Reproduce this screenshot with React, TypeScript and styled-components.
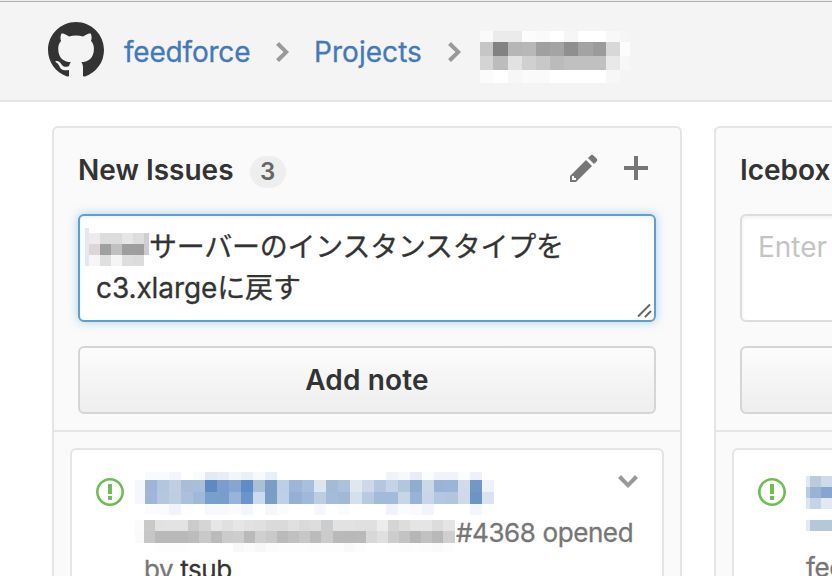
import React from "react";
import styled, { createGlobalStyle } from "styled-components";

const GlobalStyle = createGlobalStyle`
  *, *::before, *::after { box-sizing: border-box; }
  html, body { margin: 0; overflow: hidden; background: #fff; }
  body { font-family: Inter, "Noto Sans CJK JP", sans-serif; font-size: 28px; color: #333; }
  svg { display: block; flex: none; }
`;

const Page = styled.div`
  width: 832px;
  height: 576px;
  overflow: hidden;
  display: flex;
  flex-direction: column;
  border-top: 1px solid #ededed;
`;

const Header = styled.header`
  flex: none;
  height: 101px;
  display: flex;
  align-items: flex-start;
  padding-left: 48px;
  background: #f4f4f4;
  border-top: 1px solid #b0b0b0;
  border-bottom: 2px solid #e5e5e5;
`;

const Mark = styled.a`
  margin: 20px 20px 0 0;
  color: #333;
`;

const Crumb = styled.a<{ $width: number; $spacing: number }>`
  width: ${(p) => p.$width}px;
  letter-spacing: ${(p) => p.$spacing}px;
  margin-top: 30px;
  line-height: 40px;
  color: #4479b8;
  -webkit-text-stroke: 0.3px currentColor;
  white-space: nowrap;
`;

const Separator = styled.span<{ $gap: number }>`
  margin: 34px ${(p) => p.$gap}px 0 0;
  color: #999;
`;

const RedactedCrumb = styled.span`
  margin-top: 29px;
`;

const Board = styled.main`
  flex: none;
  display: flex;
  gap: 32px;
  padding: 24px 0 0 52px;
`;

const Column = styled.section`
  flex: none;
  width: 630px;
  height: 480px;
  background: #fafafa;
  border: 2px solid #e5e5e5;
  border-radius: 6px;
`;

const ColumnTop = styled.div`
  height: 304px;
  padding: 0 24px;
  border-bottom: 2px solid #e5e5e5;
`;

const ColumnHeader = styled.div`
  display: flex;
  align-items: center;
  height: 86px;
  padding-bottom: 2px;
`;

const ColumnTitle = styled.h2`
  margin: 0;
  font-size: 28px;
  font-weight: 600;
  line-height: 40px;
  white-space: nowrap;
`;

const Counter = styled.span`
  margin: 4px auto 0 16px;
  width: 36px;
  height: 32px;
  border-radius: 20px;
  background: #eee;
  color: #666;
  font-size: 24px;
  font-weight: 600;
  line-height: 32px;
  text-align: center;
`;

const HeaderAction = styled.span<{ $right: number }>`
  margin: 0 ${(p) => p.$right}px 4px 0;
  color: #767676;
`;

const NoteField = styled.div<{ $focused?: boolean }>`
  position: relative;
  height: 108px;
  padding: 10px 16px;
  line-height: 42px;
  color: ${(p) => (p.$focused ? "#333" : "#c4c4c4")};
  background: #fff;
  border: 2px solid ${(p) => (p.$focused ? "#5f9fcc" : "#ddd")};
  border-radius: 6px;
  box-shadow: inset 0 2px 4px rgba(0, 0, 0, 0.06)${(p) =>
    p.$focused ? ", 0 0 10px rgba(81, 167, 232, 0.5)" : ""};
`;

const NoteLine = styled.div<{ $spacing: number }>`
  display: flex;
  height: 41px;
  letter-spacing: ${(p) => p.$spacing}px;
  -webkit-text-stroke: 0.3px currentColor;
  white-space: nowrap;
`;

const NoteMask = styled.span`
  width: 64px;
  margin: 2px 0 0 -11px;
`;

const Grip = styled.span`
  position: absolute;
  right: 2px;
  bottom: 2px;
`;

const AddButton = styled.button`
  display: block;
  width: 100%;
  height: 68px;
  margin-top: 24px;
  padding: 0;
  font: 600 28px/40px Inter, sans-serif;
  letter-spacing: 0.15px;
  color: #333;
  border: 2px solid #d5d5d5;
  border-radius: 6px;
  background: linear-gradient(#fcfcfc, #eee);
`;

const Card = styled.article`
  display: flex;
  align-items: flex-start;
  margin: 16px;
  height: 300px;
  background: #fff;
  border: 2px solid #e5e5e5;
  border-radius: 6px;
`;

const IssueState = styled.span`
  margin: 26px 0 0 24px;
  color: #6dbd54;
`;

const CardBody = styled.div<{ $indent: number }>`
  flex: 1;
  margin-left: ${(p) => p.$indent}px;
`;

const CardHead = styled.div<{ $top: number }>`
  display: flex;
  justify-content: space-between;
  padding: ${(p) => p.$top}px 24px 0 0;
`;

const CardMeta = styled.div<{ $indent?: number }>`
  display: flex;
  height: 37px;
  padding-left: ${(p) => p.$indent ?? 0}px;
  font-size: 26px;
  line-height: 36px;
  letter-spacing: -0.4px;
  color: #767676;
  -webkit-text-stroke: 0.3px currentColor;
  white-space: pre;
`;

const IceboxMeta = styled(CardMeta)`
  margin-top: 19px;
`;

const RepoMask = styled.span`
  width: 321px;
  padding-top: 5px;
`;

const Author = styled.a`
  color: #333;
`;

const MenuToggle = styled.span`
  margin-top: -6px;
  color: #999;
`;

type MosaicProps = { xs: number[]; ys: number[]; rows: string[] };

/** Censored text: rows of space separated hex colours between the given edges. */
function Mosaic({ xs, ys, rows }: MosaicProps) {
  const w = xs[xs.length - 1];
  const h = ys[ys.length - 1];
  return (
    <svg width={w} height={h} viewBox={`0 0 ${w} ${h}`} shapeRendering="crispEdges" aria-hidden>
      {rows.flatMap((row, r) =>
        row.split(" ").map((c, i) =>
          c === "-" ? null : (
            <rect
              key={`${r}-${i}`}
              x={xs[i]}
              y={ys[r]}
              width={xs[i + 1] - xs[i]}
              height={ys[r + 1] - ys[r]}
              fill={`#${c.length === 2 ? c + c + c : c}`}
            />
          )
        )
      )}
    </svg>
  );
}

const edges = (first: number, step: number, count: number) =>
  Array.from({ length: count + 1 }, (_, i) => Math.round(first + step * i));

type IconProps = { d: string; w: number };

function Octicon({ d, w }: IconProps) {
  return (
    <svg width={w * 2} height={32} viewBox={`0 0 ${w} 16`} fill="currentColor" fillRule="evenodd" aria-hidden>
      <path d={d} />
    </svg>
  );
}

const CHEVRON_RIGHT = "M7.5 8L2.5 13 1 11.5 4.75 8 1 4.5 2.5 3 7.5 8z";
const CHEVRON_DOWN = "M5 11L0 6l1.5-1.5L5 8.25 8.5 4.5 10 6l-5 5z";
const PLUS = "M12 9H7v5H5V9H0V7h5V2h2v5h5v2z";
const PENCIL =
  "M0 12v3h3l8-8-3-3L0 12z m3 2H1V12h1v1h1v1z m10.3-9.3l-1.3 1.3-3-3 1.3-1.3c0.39-0.39 1.02-0.39 1.41 0l1.59 1.59c0.39 0.39 0.39 1.02 0 1.41z";
const ISSUE_OPENED =
  "M7 2.3c3.14 0 5.7 2.56 5.7 5.7s-2.56 5.7-5.7 5.7A5.71 5.71 0 0 1 1.3 8c0-3.14 2.56-5.7 5.7-5.7zM7 1C3.14 1 0 4.14 0 8s3.14 7 7 7 7-3.14 7-7-3.14-7-7-7zm1 3H6v5h2V4zm0 6H6v2h2v-2z";
const GITHUB =
  "M8 0C3.58 0 0 3.58 0 8c0 3.54 2.29 6.53 5.47 7.59.4.07.55-.17.55-.38 0-.19-.01-.82-.01-1.49-2.01.37-2.53-.49-2.69-.94-.09-.23-.48-.94-.82-1.13-.28-.15-.68-.52-.01-.53.63-.01 1.08.58 1.23.82.72 1.21 1.87.87 2.33.66.07-.52.28-.87.51-1.07-1.78-.2-3.64-.89-3.64-3.95 0-.87.31-1.59.82-2.15-.08-.2-.36-1.02.08-2.12 0 0 .67-.21 2.2.82.64-.18 1.32-.27 2-.27.68 0 1.36.09 2 .27 1.53-1.04 2.2-.82 2.2-.82.44 1.1.16 1.92.08 2.12.51.56.82 1.27.82 2.15 0 3.07-1.87 3.75-3.65 3.95.29.25.54.73.54 1.48 0 1.07-.01 1.93-.01 2.2 0 .21.15.46.55.38A8.013 8.013 0 0016 8c0-4.42-3.58-8-8-8z";

const crumbMask: MosaicProps = {
  xs: [0, 13, 28, 42, 56, 70, 84, 98, 113, 126, 140, 150],
  ys: [0, 11, 25, 39, 52],
  rows: [
    "fa eb eb fc fa ff f6 ff ff f8 f5",
    "c6 82 b6 b8 a0 a4 8f a3 9b d8 fc",
    "d4 bc e2 d0 c8 bb c0 c0 c0 e9 f7",
    "fb ff f7 fa fa ff ff ff ff f7 f4",
  ],
};

const noteMask: MosaicProps = {
  xs: [0, 4, 15, 26, 37, 48, 59, 64],
  ys: [0, 5, 16, 27, 38],
  rows: [
    "e1eaf4 - - - - - -",
    "e1eaf4 eeebed dc dc e6 dd cf",
    "e1eaf4 ddd5d9 a0 c0 9e 9e cc",
    "e1eaf4 f7f5f6 df f5 de dc -",
  ],
};

const titleMask: MosaicProps = {
  xs: [0, ...edges(10, 12.04, 29)],
  ys: [0, 8, 20, 32, 43],
  rows: [
    "- f8fafd f8fafd f2f5fb - f9fbfd e3eaf5 e6edf6 f2f6fb eaf0f8 f7fafd e9eff7 - - - - - - - - - eff3fa f6f8fc e9eef6 fbfcfe f0f4fa eff3fa fbfcfe edf2fa -",
    "f5f7fd a0b3da b3c6df bfcfe1 a9bdd7 a9bfd9 5d89c5 7a9dcd 86a6d1 5f8cc9 a9c0d9 799dc6 becee6 9db6d8 a8bfdf dce5f0 a4bbd8 abc2db dfe8f1 cdd9e8 b2c8e2 c3d4e8 b1c7df 8eadcf cbd8e9 99b4d9 9ab5d9 cfdaea 7398c4 eef2f9",
    "f5f7fd a0b6d9 b5c6df bdcee0 aac0db a0b8d9 799fcf 7a9ecb 9ab4d9 6b94cb cbdaec 799ec5 bed0e8 95afd5 a0b8da bdcde0 a5bcd8 a1b9d7 d4e0ec b7cae0 a2bbdb a2bbdb c7d5e8 99b3d7 c9d6e9 b4c7e2 b2c5df cfd9ea 6c95c3 dae4f0",
    "- fafcff fafbfe f3f4fb fdfdfe - f7f9fe f7f9fd fbfcfe f2f6fd - f4f7fc fbfcfe - - f6f8fd - fbfcff - - - f0f3fb fbfcff fafafe f2f4fa - - - f3f6fd -",
  ],
};

const repoMask: MosaicProps = {
  xs: [0, ...edges(9, 11.09, 28)],
  ys: [0, 11, 23, 32],
  rows: [
    "fb c9 e2 e3 e3 cb d5 e6 e0 e6 e2 e0 da da e0 da dd cccdcf e2 e2 e0 e0 ec d5 dd e5 e5 dc e4",
    "fa c6 b9 b9 b9 bc c9 bb cb cd ba cf c9 ba c0 c7 bb cb b9 b8 b9 d8 e0 cd c2 b6 c1 b8 cf",
    "- - fd fd fd - - - - f8 fb f7 fb fd fd fd fc fd fd f9 fd - - fd fc fd fc fa fd",
  ],
};

const iceboxMask: MosaicProps = {
  xs: [0, 4, 15, 26, 37],
  ys: [0, 11, 22, 33, 44, 55],
  rows: [
    "dfe9f2 bacbdd d0dbe9 c0d0e4",
    "b9cce1 99b3d5 86a6d0 99b3d5",
    "dde5f0 c5d3e6 e2e9f3 d0dbe9",
    "- - - -",
    "e3ebf1 b5c8d8 b5c8d8 c0d0e4",
  ],
};

export default function App() {
  return (
    <Page>
      <GlobalStyle />
      <Header>
        <Mark>
          <svg width={56} height={56} viewBox="0 0 16 16" fill="currentColor" fillRule="evenodd" aria-hidden>
            <path d={GITHUB} />
          </svg>
        </Mark>
        <Crumb $width={150} $spacing={-0.2}>feedforce</Crumb>
        <Separator $gap={24}><Octicon d={CHEVRON_RIGHT} w={8} /></Separator>
        <Crumb $width={132} $spacing={0.05}>Projects</Crumb>
        <Separator $gap={18}><Octicon d={CHEVRON_RIGHT} w={8} /></Separator>
        <RedactedCrumb><Mosaic {...crumbMask} /></RedactedCrumb>
      </Header>
      <Board>
        <Column>
          <ColumnTop>
            <ColumnHeader>
              <ColumnTitle>New Issues</ColumnTitle>
              <Counter>3</Counter>
              <HeaderAction $right={26}><Octicon d={PENCIL} w={14} /></HeaderAction>
              <HeaderAction $right={8}><Octicon d={PLUS} w={12} /></HeaderAction>
            </ColumnHeader>
            <NoteField $focused>
              <NoteLine $spacing={-0.25}>
                <NoteMask><Mosaic {...noteMask} /></NoteMask>
                サーバーのインスタンスタイプを
              </NoteLine>
              <NoteLine $spacing={-0.1}>c3.xlargeに戻す</NoteLine>
              <Grip>
                <svg width={15} height={15} viewBox="0 0 15 15" stroke="#666" strokeWidth={2} aria-hidden>
                  <path d="M1 13.5L13 1.5M8 14L14 8" />
                </svg>
              </Grip>
            </NoteField>
            <AddButton>Add note</AddButton>
          </ColumnTop>
          <Card>
            <IssueState><Octicon d={ISSUE_OPENED} w={14} /></IssueState>
            <CardBody $indent={11}>
              <CardHead $top={22}>
                <Mosaic {...titleMask} />
                <MenuToggle><Octicon d={CHEVRON_DOWN} w={10} /></MenuToggle>
              </CardHead>
              <CardMeta>
                <RepoMask><Mosaic {...repoMask} /></RepoMask>
                #4368 opened
              </CardMeta>
              <CardMeta $indent={9}>by <Author>tsub</Author></CardMeta>
            </CardBody>
          </Card>
        </Column>
        <Column>
          <ColumnTop>
            <ColumnHeader>
              <ColumnTitle>Icebox</ColumnTitle>
            </ColumnHeader>
            <NoteField>Enter a note</NoteField>
            <AddButton>Add note</AddButton>
          </ColumnTop>
          <Card>
            <IssueState><Octicon d={ISSUE_OPENED} w={14} /></IssueState>
            <CardBody $indent={20}>
              <CardHead $top={26}><Mosaic {...iceboxMask} /></CardHead>
              <IceboxMeta>feedforce</IceboxMeta>
            </CardBody>
          </Card>
        </Column>
      </Board>
    </Page>
  );
}
